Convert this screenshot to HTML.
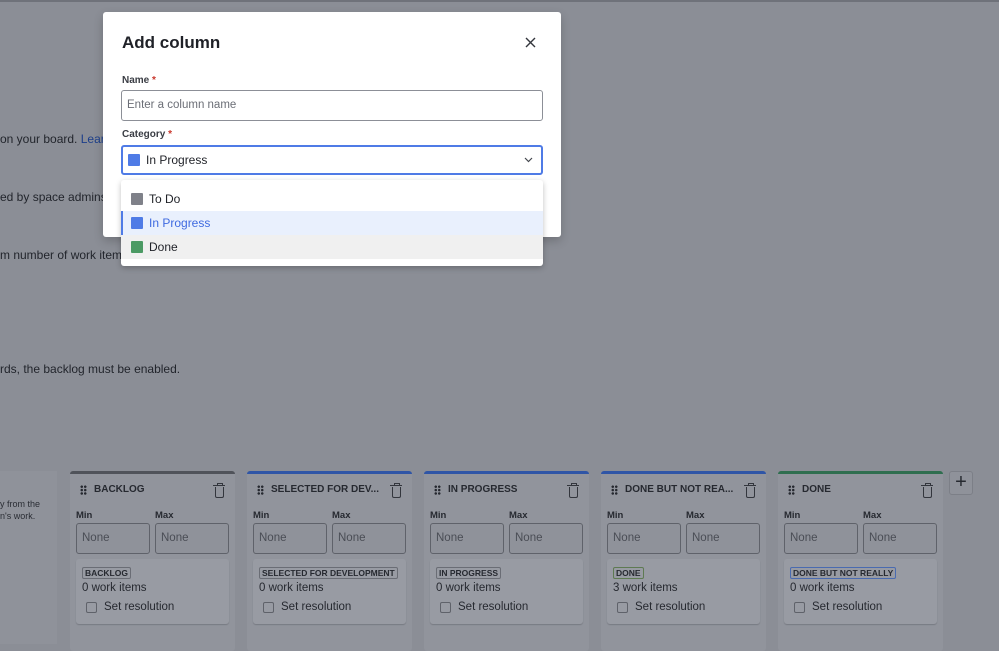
<!DOCTYPE html>
<html><head><style>
*{box-sizing:border-box;margin:0;padding:0}
body{width:999px;height:644px;overflow:hidden;background:#8b8e96;font-family:"Liberation Sans",sans-serif;position:relative;color:#1f2127}
.abs{position:absolute}
.bt{font-size:12px;color:#22252c;white-space:nowrap}
.col{position:absolute;top:471px;width:165px;height:180px;background:#91949c;border-top:3px solid #50535a;border-radius:3px}
.col .h{position:absolute;left:10px;top:10px;font-size:10px;font-weight:bold;color:#262930;display:flex;align-items:center;gap:7px}
.dots{width:7px;height:10px;background:radial-gradient(circle,#262930 1.2px,transparent 1.4px) 0 0/3.5px 3.4px}
.trash{position:absolute;right:11px;top:13px;width:9px;height:11px;border:1.4px solid #33363d;border-top:none;border-radius:0 0 2px 2px}
.trash:before{content:"";position:absolute;left:-3px;top:-2px;width:12px;border-top:1.4px solid #33363d}
.trash:after{content:"";position:absolute;left:1px;top:-4px;width:4px;height:2px;border:1.2px solid #33363d;border-bottom:none}
.lbl{position:absolute;top:36px;font-size:9.5px;font-weight:bold;color:#262930}
.in{position:absolute;top:49px;width:74px;height:31px;border:1px solid #5f626a;border-radius:3px;font-size:11.5px;color:#4a4d55;padding:8px 5px;background:#8f929a}
.card{position:absolute;left:6px;top:85px;width:153px;height:65px;background:#989ba3;border-radius:3px;box-shadow:0 1px 1px #777a82}
.tag{position:absolute;left:6px;top:8px;font-size:8.5px;font-weight:bold;border:1px solid #6a6d75;border-radius:2px;padding:0 2px;color:#262930}
.wi{position:absolute;left:6px;top:23px;font-size:11.5px;color:#262930}
.cb{position:absolute;left:10px;top:43px;width:11px;height:11px;border:1px solid #5f626a;border-radius:2px}
.sr{position:absolute;left:28px;top:42px;font-size:11.5px;color:#262930}
</style></head><body>
<div class="abs" style="left:0;top:0;width:999px;height:2px;background:#6f727a"></div>
<div class="abs bt" style="left:0;top:132px">on your board. <span style="color:#1d3f8a">Learn</span></div>
<div class="abs bt" style="left:0;top:190px">ed by space admins b</div>
<div class="abs bt" style="left:0;top:248px">m number of work items</div>
<div class="abs bt" style="left:0;top:362px">rds, the backlog must be enabled.</div>
<div class="abs" style="left:0;top:471px;width:57px;height:173px;background:#8f929a"></div>
<div class="abs" style="left:0;top:498px;font-size:9px;color:#2a2d34;line-height:12px">y from the<br>n's work.</div>

<div class="col" style="left:70px"><div class="h"><span class="dots"></span>BACKLOG</div><div class="trash"></div><div class="lbl" style="left:6px">Min</div><div class="lbl" style="left:85px">Max</div><div class="in" style="left:6px">None</div><div class="in" style="left:85px">None</div><div class="card"><span class="tag">BACKLOG</span><div class="wi">0 work items</div><div class="cb"></div><div class="sr">Set resolution</div></div></div>
<div class="col" style="left:247px;border-top-color:#2f55a6"><div class="h"><span class="dots"></span>SELECTED FOR DEV...</div><div class="trash"></div><div class="lbl" style="left:6px">Min</div><div class="lbl" style="left:85px">Max</div><div class="in" style="left:6px">None</div><div class="in" style="left:85px">None</div><div class="card"><span class="tag">SELECTED FOR DEVELOPMENT</span><div class="wi">0 work items</div><div class="cb"></div><div class="sr">Set resolution</div></div></div>
<div class="col" style="left:424px;border-top-color:#2f55a6"><div class="h"><span class="dots"></span>IN PROGRESS</div><div class="trash"></div><div class="lbl" style="left:6px">Min</div><div class="lbl" style="left:85px">Max</div><div class="in" style="left:6px">None</div><div class="in" style="left:85px">None</div><div class="card"><span class="tag">IN PROGRESS</span><div class="wi">0 work items</div><div class="cb"></div><div class="sr">Set resolution</div></div></div>
<div class="col" style="left:601px;border-top-color:#2f55a6"><div class="h"><span class="dots"></span>DONE BUT NOT REA...</div><div class="trash"></div><div class="lbl" style="left:6px">Min</div><div class="lbl" style="left:85px">Max</div><div class="in" style="left:6px">None</div><div class="in" style="left:85px">None</div><div class="card"><span class="tag" style="border-color:#5e7a52">DONE</span><div class="wi">3 work items</div><div class="cb"></div><div class="sr">Set resolution</div></div></div>
<div class="col" style="left:778px;border-top-color:#2f6e4f"><div class="h"><span class="dots"></span>DONE</div><div class="trash"></div><div class="lbl" style="left:6px">Min</div><div class="lbl" style="left:85px">Max</div><div class="in" style="left:6px">None</div><div class="in" style="left:85px">None</div><div class="card"><span class="tag" style="border-color:#4a6bb0">DONE BUT NOT REALLY</span><div class="wi">0 work items</div><div class="cb"></div><div class="sr">Set resolution</div></div></div>
<div class="abs" style="left:949px;top:471px;width:24px;height:24px;border:1px solid #7c7f87;border-radius:3px;background:#8f929a;font-size:20px;line-height:21px;text-align:center;color:#262930">+</div>

<div class="abs" style="left:103px;top:12px;width:458px;height:225px;background:#fff;border-radius:3px;box-shadow:0 4px 10px rgba(0,0,0,.2)">
<div class="abs" style="left:19px;top:21px;font-size:17px;font-weight:bold;color:#1f2127">Add column</div>
<svg class="abs" style="left:422px;top:25px" width="11" height="11" viewBox="0 0 11 11"><path d="M1 1L10 10M10 1L1 10" stroke="#33363d" stroke-width="1.4"/></svg>
<div class="abs" style="left:19px;top:63px;font-size:10px;font-weight:bold;color:#3a3d44">Name <span style="color:#c9372c">*</span></div>
<div class="abs" style="left:18px;top:78px;width:422px;height:31px;border:1px solid #8c8f97;border-radius:3px;font-size:11.5px;color:#6b6e76;padding:8px 5px">Enter a column name</div>
<div class="abs" style="left:19px;top:117px;font-size:10px;font-weight:bold;color:#3a3d44">Category <span style="color:#c9372c">*</span></div>
<div class="abs" style="left:18px;top:133px;width:422px;height:30px;border:2px solid #4f7be6;border-radius:3px;font-size:12px;color:#1f2127;padding:6px 5px;display:flex;align-items:center;gap:6px"><span style="width:12px;height:12px;background:#4f7be6;border-radius:1px"></span>In Progress
<svg class="abs" style="right:8px;top:10px" width="9" height="6" viewBox="0 0 9 6"><path d="M1 1L4.5 4.5L8 1" stroke="#44474e" stroke-width="1.2" fill="none"/></svg></div>
</div>
<div class="abs" style="left:121px;top:180px;width:422px;height:86px;background:#fff;border-radius:3px;box-shadow:0 2px 6px rgba(0,0,0,.25);font-size:12px">
<div class="abs" style="left:0;top:6px;width:422px;height:25px;display:flex;align-items:center;gap:6px;padding-left:10px;color:#1f2127"><span style="width:12px;height:12px;background:#7f8189;border-radius:1px"></span>To Do</div>
<div class="abs" style="left:0;top:31px;width:422px;height:24px;background:#e9f0fd;border-left:2px solid #4f7be6;display:flex;align-items:center;gap:6px;padding-left:8px;color:#3f6ae0"><span style="width:12px;height:12px;background:#4f7be6;border-radius:1px"></span>In Progress</div>
<div class="abs" style="left:0;top:55px;width:422px;height:24px;background:#f0f0f0;display:flex;align-items:center;gap:6px;padding-left:10px;color:#1f2127"><span style="width:12px;height:12px;background:#4b9a64;border-radius:1px"></span>Done</div>
</div>
</body></html>
